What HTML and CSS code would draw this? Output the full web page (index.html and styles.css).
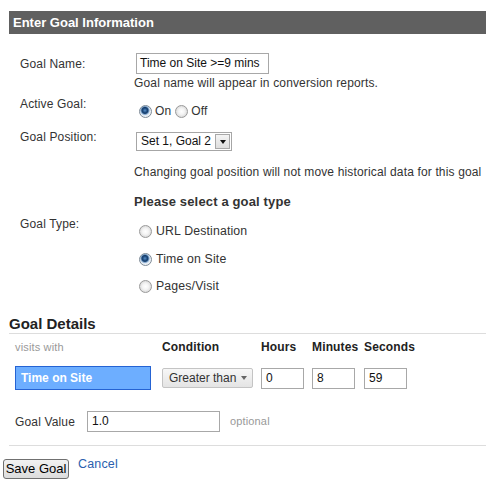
FILE: index.html
```html
<!DOCTYPE html>
<html>
<head>
<meta charset="utf-8">
<link rel="stylesheet" href="styles.css">
</head>
<body>
<div class="panel">
  <div class="header">Enter Goal Information</div>
  <div class="form">
    <div class="row row-name">
      <div class="lbl">Goal Name:</div>
      <div class="val">
        <div class="textbox name-box">Time on Site &gt;=9 mins</div>
        <div class="hint hint-name">Goal name will appear in conversion reports.</div>
      </div>
    </div>
    <div class="row row-active">
      <div class="lbl">Active Goal:</div>
      <div class="val">
        <div class="radios-inline">
          <span class="opt"><span class="radio checked"></span>On</span>
          <span class="opt"><span class="radio"></span>Off</span>
        </div>
      </div>
    </div>
    <div class="row row-pos">
      <div class="lbl">Goal Position:</div>
      <div class="val">
        <div class="select">
          <span class="select-text">Set 1, Goal 2</span>
          <span class="select-btn"><span class="tri"></span></span>
        </div>
        <div class="hint hint-pos">Changing goal position will not move historical data for this goal</div>
      </div>
    </div>
    <div class="row row-head">
      <div></div>
      <div class="val"><div class="type-title">Please select a goal type</div></div>
    </div>
    <div class="row row-type">
      <div class="lbl">Goal Type:</div>
      <div class="val">
        <div class="radios-stack">
          <span class="opt"><span class="radio"></span>URL Destination</span>
          <span class="opt"><span class="radio checked"></span>Time on Site</span>
          <span class="opt"><span class="radio"></span>Pages/Visit</span>
        </div>
      </div>
    </div>
  </div>

  <div class="details">
    <div class="details-title">Goal Details</div>
    <div class="details-grid">
      <div class="muted">visits with</div>
      <div class="colhead">Condition</div>
      <div class="colhead">Hours</div>
      <div class="colhead">Minutes</div>
      <div class="colhead">Seconds</div>

      <div class="metric">Time on Site</div>
      <div class="cond"><span>Greater than</span><span class="tri tri-gray"></span></div>
      <div class="textbox num">0</div>
      <div class="textbox num">8</div>
      <div class="textbox num">59</div>
    </div>
    <div class="value-row">
      <span class="value-lbl">Goal Value</span>
      <div class="textbox value-box">1.0</div>
      <span class="muted">optional</span>
    </div>
  </div>
</div>
<div class="actions">
  <button class="save">Save Goal</button>
  <a class="cancel" href="#">Cancel</a>
</div>
</body>
</html>
```
FILE: styles.css
```css
html, body {
  margin: 0;
  padding: 0;
  background: #fff;
}
body {
  font-family: "Liberation Sans", Arial, sans-serif;
  font-size: 12px;
  letter-spacing: 0.15px;
  color: #333;
}
.panel {
  padding: 11px 2px 0 9px;
}
.header {
  height: 23px;
  line-height: 23px;
  background: #606060;
  color: #fff;
  font-weight: bold;
  font-size: 13px;
  letter-spacing: 0;
  padding-left: 4px;
}
.form {
  padding-left: 11px;
}
.row {
  display: grid;
  grid-template-columns: 114px 1fr;
}
.lbl {
  line-height: 15px;
}
.val {
  line-height: 15px;
}
.textbox {
  box-sizing: border-box;
  border: 1px solid #a8a8a8;
  background: #fff;
  color: #111;
  font-size: 12px;
  letter-spacing: 0;
  padding-left: 4px;
}
.row-name {
  margin-top: 19px;
}
.row-name .lbl {
  padding-top: 4px;
}
.name-box {
  margin-left: 2px;
  width: 133px;
  height: 21px;
  line-height: 19px;
  padding-left: 3px;
  white-space: nowrap;
}
.hint-name {
  margin-top: 2px;
}
.row-active {
  margin-top: 6px;
}
.radios-inline {
  margin-top: 7px;
  display: flex;
  gap: 4px;
  margin-left: 5px;
}
.opt {
  display: flex;
  align-items: center;
  gap: 3px;
  font-size: 12px;
  color: #333;
  height: 15px;
}
.radio {
  box-sizing: border-box;
  width: 13px;
  height: 13px;
  border-radius: 50%;
  border: 1px solid #9a9a9a;
  background: radial-gradient(circle at 50% 50%, #ffffff 0, #f4f4f4 3px, #d9d9d9 6px);
  flex: none;
}
.radio.checked {
  border-color: #7d8a96;
  background: radial-gradient(circle at 45% 40%, #5c8fc4 0, #1f4f85 2px, #173c68 3px, #7fa6cf 4px, #dfe8f1 5px, #eef2f6 6px);
}
.row-pos {
  margin-top: 11px;
}
.select {
  margin-top: 2px;
  margin-left: 2px;
  box-sizing: border-box;
  width: 96px;
  height: 19px;
  border: 1px solid #a6a6a6;
  display: flex;
  align-items: center;
  justify-content: space-between;
  padding: 0 1px 0 4px;
  background: #fff;
  color: #111;
  letter-spacing: 0;
}
.select-btn {
  box-sizing: border-box;
  width: 15px;
  height: 15px;
  border: 1px solid #a8a8a8;
  background: linear-gradient(#f4f4f4, #dedede);
  display: flex;
  align-items: center;
  justify-content: center;
}
.tri {
  width: 0;
  height: 0;
  border-left: 3.5px solid transparent;
  border-right: 3.5px solid transparent;
  border-top: 4px solid #111;
}
.hint-pos {
  margin-top: 14px;
}
.row-head {
  margin-top: 14px;
}
.type-title {
  font-size: 13px;
  font-weight: bold;
  line-height: 16px;
  color: #333;
}
.row-type {
  margin-top: 7px;
}
.radios-stack {
  margin-top: 7px;
  margin-left: 5px;
  display: flex;
  flex-direction: column;
  gap: 12.5px;
}
.radios-stack .opt {
  gap: 4px;
  font-size: 12.3px;
}
.details {
  margin-top: 21px;
  border-bottom: 1px solid #dddddd;
  padding-bottom: 13px;
}
.details-title {
  font-size: 15px;
  font-weight: bold;
  line-height: 18px;
  color: #222;
  letter-spacing: 0;
  border-bottom: 1px solid #dddddd;
}
.details-grid {
  margin-top: 6px;
  padding-left: 6px;
  display: grid;
  grid-template-columns: 147px 99px 51px 52px auto;
  row-gap: 11px;
  align-items: center;
}
.muted {
  color: #999;
  font-size: 11px;
  line-height: 15px;
}
.colhead {
  font-weight: bold;
  color: #222;
  line-height: 15px;
}
.metric {
  box-sizing: border-box;
  width: 136px;
  height: 24px;
  background: #6daeff;
  border: 1px solid #2563d3;
  color: #fff;
  font-weight: bold;
  letter-spacing: 0;
  line-height: 22px;
  padding-left: 5px;
}
.cond {
  box-sizing: border-box;
  width: 91px;
  height: 20px;
  border: 1px solid #c4c4c4;
  border-radius: 2px;
  background: linear-gradient(#f7f7f7, #e4e4e4);
  display: flex;
  align-items: center;
  justify-content: space-between;
  padding: 0 5px 0 6px;
  color: #333;
  letter-spacing: 0;
}
.tri-gray {
  border-top-color: #666;
}
.num {
  width: 43px;
  height: 21px;
  line-height: 19px;
}
.value-row {
  margin-top: 21px;
  padding-left: 6px;
  display: flex;
  align-items: center;
}
.value-lbl {
  width: 72px;
}
.value-box {
  width: 133px;
  height: 21px;
  line-height: 19px;
  margin-right: 10px;
}
.actions {
  margin-top: 13px;
  padding-left: 3px;
  display: flex;
  align-items: flex-start;
  gap: 9px;
}
.save {
  box-sizing: border-box;
  width: 66px;
  height: 20px;
  margin-top: 0;
  padding: 0;
  border: 1px solid #707070;
  border-radius: 3px;
  background: linear-gradient(#f2f2f2, #dcdcdc);
  font-family: "Liberation Sans", Arial, sans-serif;
  font-size: 13px;
  letter-spacing: 0;
  color: #000;
  line-height: 18px;
}
.cancel {
  color: #2b5fae;
  text-decoration: none;
  font-size: 12.5px;
  margin-top: -2px;
}
```
